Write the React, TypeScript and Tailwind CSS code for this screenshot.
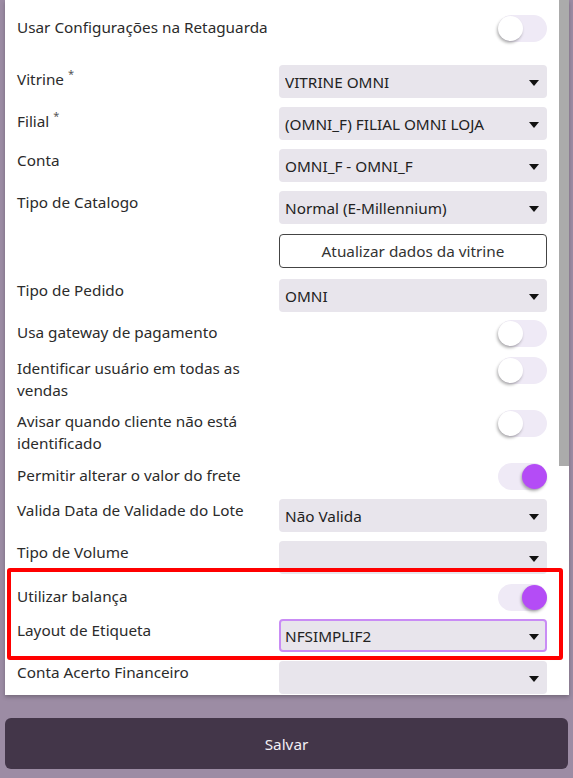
import React from "react";

function Toggle({ on }: { on?: boolean }) {
  return (
    <div className="relative w-[49px] h-[27px] rounded-full bg-[#efeaf6] shrink-0">
      {on ? (
        <div className="absolute top-[1px] right-0 w-[25px] h-[25px] rounded-full bg-[#b44cf6] shadow-[-1px_2px_3px_rgba(0,0,0,0.3)]" />
      ) : (
        <div className="absolute top-[1px] left-0 w-[25px] h-[25px] rounded-full bg-white shadow-[-1px_2px_3px_rgba(0,0,0,0.3)]" />
      )}
    </div>
  );
}

function Caret() {
  return (
    <svg width="10" height="6" viewBox="0 0 10 6" className="shrink-0 mt-[2px]">
      <path d="M0 0 L10 0 L5 6 Z" fill="#111" />
    </svg>
  );
}

function Select({ value, focused }: { value?: string; focused?: boolean }) {
  return (
    <div
      className={
        focused
          ? "flex items-center h-[33px] w-[268px] rounded-[4px] bg-[#e8e5ec] border-2 border-[#c98cf5] pl-[4px] pr-[6px]"
          : "flex items-center h-[33px] w-[268px] rounded-[4px] bg-[#e8e5ec] pl-[6px] pr-[8px]"
      }
    >
      <span className="flex-1 truncate text-[#222] leading-[22px]">{value}</span>
      <Caret />
    </div>
  );
}

function SelectRow({ label, value, req, focused, mt }: { label: string; value?: string; req?: boolean; focused?: boolean; mt: string }) {
  return (
    <div className={"grid grid-cols-[262px_268px] items-start " + mt}>
      <div className={(req ? "pt-[3px] " : "pt-0 ") + "leading-[22px] text-[#2b2b2b]"}>
        {label}
        {req && <span className="text-[11px] ml-[4px] relative top-[-7px] text-[#555]">*</span>}
      </div>
      <Select value={value} focused={focused} />
    </div>
  );
}

function ToggleRow({ label, on, mt, twoLine, wide }: { label: string; on?: boolean; mt: string; twoLine?: boolean; wide?: boolean }) {
  return (
    <div className={"flex justify-between " + (twoLine ? "items-start " : "items-center ") + mt}>
      <div
        className={
          (twoLine ? "" : "relative top-[-2px] ") +
          (wide ? "w-[400px] " : "w-[240px] ") +
          "leading-[22px] text-[#2b2b2b]"
        }
      >
        {label}
      </div>
      <Toggle on={on} />
    </div>
  );
}

export default function App() {
  return (
    <div className="w-[573px] h-[778px] bg-[#9c8ca4] overflow-hidden font-['Noto_Sans',sans-serif] text-[15.3px]">
      <div className="ml-[5px] w-[564px] h-[695px] bg-white flex overflow-hidden shadow-[0_2px_4px_rgba(0,0,0,0.25)]">
        <div className="w-[554px] px-[12px] pt-[15px] flex flex-col">
          <ToggleRow mt="mt-0" wide label="Usar Configurações na Retaguarda" />
          <SelectRow mt="mt-[23px]" label="Vitrine" req value="VITRINE OMNI" />
          <SelectRow mt="mt-[9px]" label="Filial" req value="(OMNI_F) FILIAL OMNI LOJA" />
          <SelectRow mt="mt-[9px]" label="Conta" value="OMNI_F - OMNI_F" />
          <SelectRow mt="mt-[9px]" label="Tipo de Catalogo" value="Normal (E-Millennium)" />
          <div className="grid grid-cols-[262px_268px] mt-[10px]">
            <div />
            <button className="h-[34px] w-[268px] rounded-[4px] border border-[#444] bg-white text-[#333] leading-[22px]">
              Atualizar dados da vitrine
            </button>
          </div>
          <SelectRow mt="mt-[11px]" label="Tipo de Pedido" value="OMNI" />
          <ToggleRow mt="mt-[8px]" label="Usa gateway de pagamento" />
          <ToggleRow mt="mt-[10px]" twoLine label="Identificar usuário em todas as vendas" />
          <ToggleRow mt="mt-[9px]" twoLine label="Avisar quando cliente não está identificado" />
          <ToggleRow mt="mt-[9px]" on label="Permitir alterar o valor do frete" />
          <SelectRow mt="mt-[9px]" label="Valida Data de Validade do Lote" value="Não Valida" />
          <SelectRow mt="mt-[9px]" label="Tipo de Volume" value="" />
          <div className="relative mt-[10px] flex flex-col">
            <ToggleRow mt="mt-0" on label="Utilizar balança" />
            <SelectRow mt="mt-[8px]" label="Layout de Etiqueta" value="NFSIMPLIF2" focused />
            <div className="absolute top-[-16px] bottom-[-8px] left-[-10px] right-[-16px] border-4 border-[#ff0000] rounded-[3px] pointer-events-none" />
          </div>
          <SelectRow mt="mt-[9px]" label="Conta Acerto Financeiro" value="" />
        </div>
        <div className="w-[10px] shrink-0">
          <div className="h-[466px] w-full bg-[#ababab]" />
        </div>
      </div>
      <button className="mt-[23px] ml-[5px] w-[563px] h-[51px] rounded-[6px] bg-[#433649] text-[#f2eff4] leading-[22px]">
        Salvar
      </button>
    </div>
  );
}
